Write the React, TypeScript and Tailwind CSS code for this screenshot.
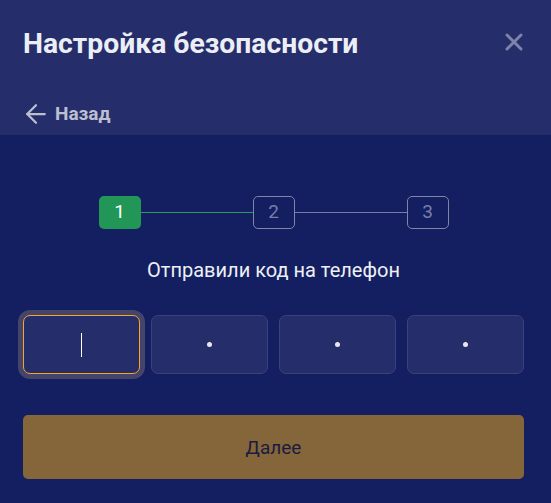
import { ArrowLeft, X } from 'lucide-react';

const steps = [1, 2, 3];

export default function App() {
  return (
    <div className="w-[551px] h-[503px] bg-[#131f60] font-['Roboto',sans-serif] flex flex-col">
      <div className="bg-[#252e6b] h-[135px] flex flex-col px-[23px]">
        <div className="flex items-start justify-between pt-[26px]">
          <h1 className="text-[28.3px] leading-[36px] font-bold text-[#eceef6]">Настройка безопасности</h1>
          <button className="mt-[2px] text-[#7e84a9]">
            <X size={28} strokeWidth={2.5} />
          </button>
        </div>
        <button className="mt-auto mb-[6px] flex items-center gap-[4px] text-[#bcbfd0]">
          <ArrowLeft size={30} strokeWidth={1.8} className="-ml-[2px]" />
          <span className="text-[19px] font-bold leading-[28px]">Назад</span>
        </button>
      </div>

      <div className="flex flex-col px-[23px] pr-[27px]">
        <div className="flex items-center justify-center mt-[61px]">
          {steps.map((n, i) => (
            <div key={n} className="flex items-center">
              {i > 0 && (
                <div className={`h-px w-[112px] ${i === 1 ? 'bg-[#2a9a5f]' : 'bg-[#767caa]'}`} />
              )}
              <div
                className={
                  n === 1
                    ? 'w-[42px] h-[33px] rounded-[5px] bg-[#229657] text-white flex items-center justify-center text-[19px]'
                    : 'w-[42px] h-[33px] rounded-[5px] border border-[#7e84aa] text-[#787eaa] flex items-center justify-center text-[19px]'
                }
              >
                {n}
              </div>
            </div>
          ))}
        </div>

        <p className="mt-[27px] text-center text-[20px] leading-[28px] text-[#eef0f7]">Отправили код на телефон</p>

        <div className="mt-[31px] grid grid-cols-4 gap-[11px]">
          <div className="h-[59px] rounded-[7px] bg-[#252e6b] border-[1.5px] border-[#f5a623] shadow-[0_0_0_5px_#45446a] flex items-center justify-center">
            <div className="w-px h-[24px] bg-white" />
          </div>
          {[0, 1, 2].map((k) => (
            <div
              key={k}
              className="h-[59px] rounded-[7px] bg-[#252e6b] border border-[#39427c] flex items-center justify-center"
            >
              <div className="w-[5px] h-[5px] rounded-full bg-[#e6e8f2]" />
            </div>
          ))}
        </div>

        <button className="mt-[41px] h-[64px] rounded-[5px] bg-[#84663a] text-[#1a1b40] text-[19px] pt-[2px]">
          Далее
        </button>
      </div>
    </div>
  );
}
